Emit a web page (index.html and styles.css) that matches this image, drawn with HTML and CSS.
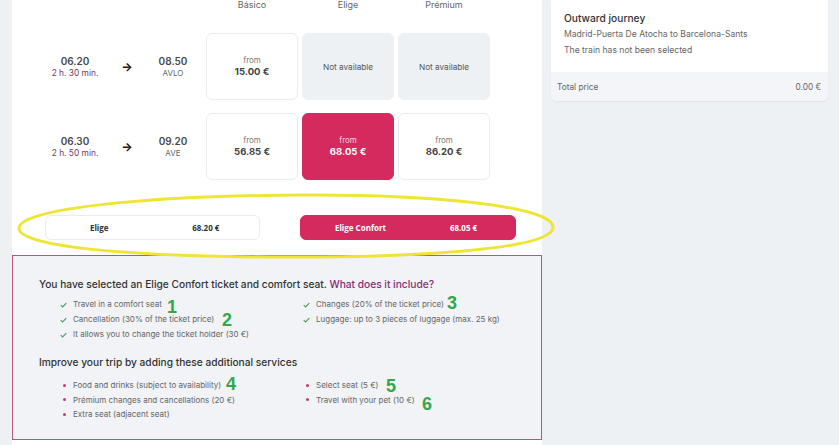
FILE: index.html
```html
<!DOCTYPE html>
<html lang="en">
<head>
<meta charset="utf-8">
<title>Fares</title>
<link rel="stylesheet" href="styles.css">
</head>
<body>
<div class="page">
  <div class="gutter"></div>
  <main class="panel">
    <div class="fares-head">
      <span>Básico</span>
      <span>Elige</span>
      <span>Prémium</span>
    </div>

    <div class="train-row">
      <div class="times">
        <div class="stop">
          <div class="hour">06.20</div>
          <div class="dur">2 h. 30 min.</div>
        </div>
        <div class="arrow">&#x2192;</div>
        <div class="stop">
          <div class="hour">08.50</div>
          <div class="type">AVLO</div>
        </div>
      </div>
      <div class="cards">
        <div class="card"><span class="from">from</span><span class="price">15.00 €</span></div>
        <div class="card na">Not available</div>
        <div class="card na">Not available</div>
      </div>
    </div>

    <div class="train-row second">
      <div class="times">
        <div class="stop">
          <div class="hour">06.30</div>
          <div class="dur">2 h. 50 min.</div>
        </div>
        <div class="arrow">&#x2192;</div>
        <div class="stop">
          <div class="hour">09.20</div>
          <div class="type">AVE</div>
        </div>
      </div>
      <div class="cards">
        <div class="card"><span class="from">from</span><span class="price">56.85 €</span></div>
        <div class="card selected"><span class="from">from</span><span class="price">68.05 €</span></div>
        <div class="card"><span class="from">from</span><span class="price">86.20 €</span></div>
      </div>
    </div>

    <div class="upgrade-row">
      <div class="opt"><span>Elige</span><span>68.20 €</span></div>
      <div class="opt active"><span>Elige Confort</span><span>68.05 €</span></div>
    </div>

    <section class="info">
      <h2 class="info-title">You have selected an Elige Confort ticket and comfort seat. <span class="link">What does it include?</span></h2>
      <ul class="checks">
        <li><svg class="tick" viewBox="0 0 8 6" width="7" height="6"><path d="M0.8 3.2 L3 5.2 L7.2 0.8" fill="none" stroke="#4f9a64" stroke-width="1.3"/></svg>Travel in a comfort seat</li>
        <li><svg class="tick" viewBox="0 0 8 6" width="7" height="6"><path d="M0.8 3.2 L3 5.2 L7.2 0.8" fill="none" stroke="#4f9a64" stroke-width="1.3"/></svg>Changes (20% of the ticket price)</li>
        <li><svg class="tick" viewBox="0 0 8 6" width="7" height="6"><path d="M0.8 3.2 L3 5.2 L7.2 0.8" fill="none" stroke="#4f9a64" stroke-width="1.3"/></svg>Cancellation (30% of the ticket price)</li>
        <li><svg class="tick" viewBox="0 0 8 6" width="7" height="6"><path d="M0.8 3.2 L3 5.2 L7.2 0.8" fill="none" stroke="#4f9a64" stroke-width="1.3"/></svg>Luggage: up to 3 pieces of luggage (max. 25 kg)</li>
        <li><svg class="tick" viewBox="0 0 8 6" width="7" height="6"><path d="M0.8 3.2 L3 5.2 L7.2 0.8" fill="none" stroke="#4f9a64" stroke-width="1.3"/></svg>It allows you to change the ticket holder (30 €)</li>
      </ul>
      <h2 class="info-sub">Improve your trip by adding these additional services</h2>
      <ul class="extras">
        <li>Food and drinks (subject to availability)</li>
        <li>Select seat (5 €)</li>
        <li>Prémium changes and cancellations (20 €)</li>
        <li>Travel with your pet (10 €)</li>
        <li>Extra seat (adjacent seat)</li>
      </ul>
    </section>
  </main>

  <aside class="side">
    <div class="summary">
      <div class="summary-body">
        <div class="sum-title">Outward journey</div>
        <div class="sum-line">Madrid-Puerta De Atocha to Barcelona-Sants</div>
        <div class="sum-line">The train has not been selected</div>
      </div>
      <div class="summary-foot"><span>Total price</span><span>0.00 €</span></div>
    </div>
  </aside>
</div>

<svg class="ring" width="839" height="445" viewBox="0 0 839 445">
  <path d="M300 195 C 420 194, 556 205, 553 228 C 550 249, 420 258, 270 257 C 120 256, 18 246, 19 228 C 20 208, 150 196, 300 195 Z" fill="none" stroke="#eee536" stroke-width="3"/>
</svg>
<span class="num n1">1</span>
<span class="num n2">2</span>
<span class="num n3">3</span>
<span class="num n4">4</span>
<span class="num n5">5</span>
<span class="num n6">6</span>
</body>
</html>
```

FILE: styles.css
```css
* { box-sizing: border-box; }
html, body { margin: 0; padding: 0; }
body {
  width: 839px;
  height: 445px;
  overflow: hidden;
  background: #eef1f4;
  font-family: Inter, "Noto Sans", "Liberation Sans", sans-serif;
  color: #444;
  position: relative;
}
.page {
  display: grid;
  grid-template-columns: 12px 530px 1fr;
  height: 445px;
}
.gutter { background: #eef1f4; }
.panel {
  background: #ffffff;
  display: flex;
  flex-direction: column;
}
.fares-head {
  display: flex;
  gap: 4px;
  padding-left: 194px;
  height: 12px;
  font-size: 9px;
  color: #666;
  line-height: 10px;
}
.fares-head span { width: 92px; text-align: center; }

.train-row {
  display: flex;
  padding-left: 33px;
  margin-top: 21px;
  height: 67px;
}
.train-row.second { margin-top: 13px; }
.times {
  width: 161px;
  display: grid;
  grid-template-columns: 60px 44px 48px;
  align-items: center;
}
.stop { text-align: center; }
.hour { font-size: 10px; font-weight: 600; color: #4a4a4a; line-height: 13px; }
.dur { font-size: 8.4px; color: #6d3c62; line-height: 11px; }
.type { font-size: 8px; color: #666; line-height: 11px; }
.arrow { text-align: center; font-size: 12px; color: #222; font-weight: 700; line-height: 12px; }

.cards { display: flex; gap: 4px; }
.card {
  width: 92px;
  height: 67px;
  border: 1px solid #e9ecef;
  border-radius: 6px;
  background: #fff;
  display: flex;
  flex-direction: column;
  align-items: center;
  justify-content: center;
  font-size: 8.2px;
  color: #555;
}
.card.na { background: #eef1f4; border-color: #eef1f4; color: #555; }
.card.selected { background: #d52a5e; border-color: #d52a5e; color: #fff; }
.from { font-size: 8px; line-height: 11px; color: #777; }
.price { font-size: 9.5px; font-weight: 700; line-height: 12px; color: #444; }
.selected .from { color: #f3d5df; }
.selected .price { color: #fff; }

.upgrade-row {
  display: flex;
  gap: 40px;
  padding-left: 33px;
  margin-top: 35px;
  height: 25px;
}
.opt {
  width: 215px;
  height: 25px;
  border: 1px solid #e9ecef;
  border-radius: 6px;
  display: grid;
  grid-template-columns: 1fr 1fr;
  align-items: center;
  text-align: center;
  font-family: "Open Sans", "Liberation Sans", sans-serif;
  font-weight: 700;
  font-size: 8px;
  color: #333;
}
.opt.active {
  width: 216px;
  background: #d52a5e;
  border-color: #d52a5e;
  color: #fff;
  padding-left: 8px;
}

.info {
  margin-top: 15px;
  height: 185px;
  border: 1.5px solid #b8557f;
  background: #f1f3f6;
  padding: 21px 0 0 26px;
}
.info-title, .info-sub {
  margin: 0;
  font-size: 10.2px;
  font-weight: 500;
  color: #333;
  line-height: 14px;
}
.link { color: #8a2b77; }
.checks, .extras {
  list-style: none;
  margin: 0;
  padding: 0 0 0 21px;
  display: grid;
  grid-template-columns: 243px 243px;
  font-size: 8px;
  color: #666;
}
.checks { margin-top: 6px; margin-bottom: 13px; }
.checks li { line-height: 15px; display: flex; align-items: center; }
.tick { margin-right: 6px; flex: none; }
.extras { margin-top: 9px; padding-left: 24px; }
.extras li { line-height: 14.5px; display: flex; align-items: center; }
.extras li::before {
  content: "";
  width: 3px;
  height: 3px;
  border-radius: 50%;
  background: #c3396d;
  margin-right: 7px;
  flex: none;
}

.side { padding-left: 9px; padding-right: 11px; }
.summary {
  background: #fff;
  border-radius: 0 0 6px 6px;
  box-shadow: 0 1px 2px rgba(0,0,0,0.06);
  overflow: hidden;
}
.summary-body { padding: 10px 13px 0 13px; height: 72px; }
.sum-title { font-size: 10.2px; color: #333; line-height: 16px; font-weight: 500; }
.sum-line { font-size: 8.6px; color: #666; line-height: 16px; }
.summary-foot {
  background: #f3f5f8;
  height: 29px;
  display: flex;
  justify-content: space-between;
  align-items: center;
  padding: 0 7px 0 6px;
  font-size: 8.3px;
  color: #666;
}

.ring { position: absolute; left: 0; top: 0; pointer-events: none; }
.num {
  position: absolute;
  font-family: "Liberation Sans", Arial, sans-serif;
  font-weight: 700;
  font-size: 18px;
  line-height: 18px;
  color: #33a84a;
}
.n1 { left: 167px; top: 298px; }
.n2 { left: 222px; top: 311px; }
.n3 { left: 447px; top: 294px; }
.n4 { left: 226px; top: 375px; }
.n5 { left: 386px; top: 377px; }
.n6 { left: 422px; top: 395px; }
```
